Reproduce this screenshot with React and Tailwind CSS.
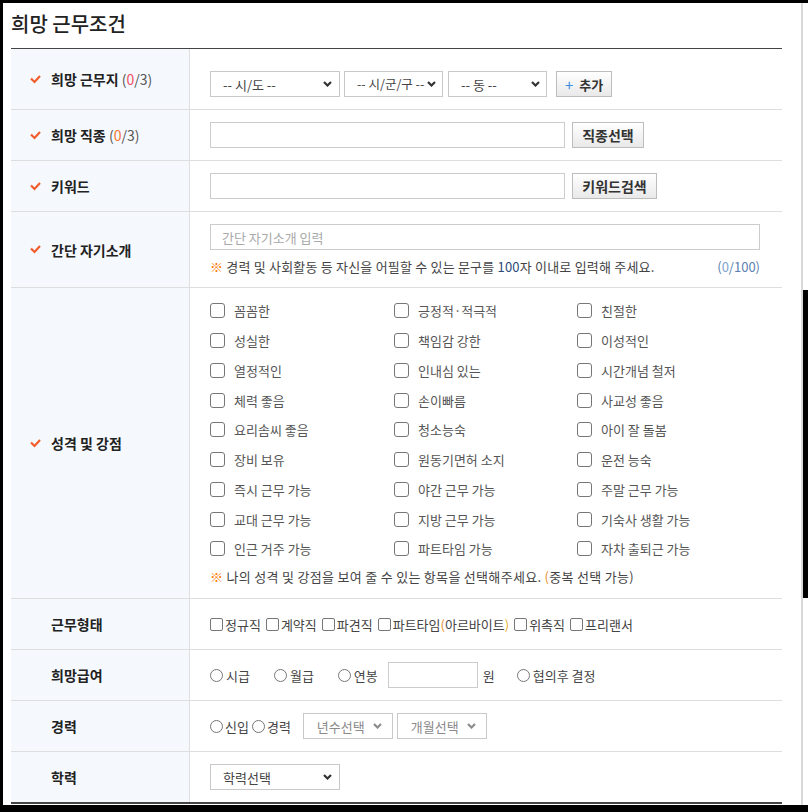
import React from "react";

function Check() {
  return (
    <svg width="11" height="9" viewBox="0 0 11 9" className="mr-[10px] shrink-0">
      <polyline points="1,3.5 4.5,7 10,1" fill="none" stroke="#f25c2a" strokeWidth="2.2" />
    </svg>
  );
}

function Chevron({ light }) {
  return (
    <svg width="9" height="6" viewBox="0 0 9 6" className="shrink-0">
      <polyline points="1,1 4.5,4.5 8,1" fill="none" stroke={light ? "#8c8c8c" : "#333333"} strokeWidth="2.2" />
    </svg>
  );
}

function Select({ className, text, light, small }) {
  let tc = "whitespace-nowrap text-[13px] leading-none text-[#444]";
  if (light) tc = "whitespace-nowrap text-[13px] leading-none text-[#8a8a8a]";
  if (small) tc = "whitespace-nowrap text-[12.5px] leading-none text-[#444]";
  return (
    <div className={"flex shrink-0 items-center justify-between overflow-hidden border border-[#c9c9c9] bg-white " + className}>
      <span className={tc}>{text}</span>
      <Chevron light={light} />
    </div>
  );
}

function Button({ className, children }) {
  return (
    <div className={"flex shrink-0 items-center justify-center border border-[#bdbdbd] bg-linear-to-b from-white to-[#e9e9e9] text-[14px] font-bold leading-none text-[#333] " + className}>
      {children}
    </div>
  );
}

function Label({ check, children }) {
  return (
    <div className="flex w-[179px] shrink-0 items-center border-r border-[#dedede] bg-[#f5f9fe] pl-[19px]">
      {check ? <Check /> : <span className="w-[21px] shrink-0" />}
      <span className="whitespace-nowrap text-[14px] font-bold leading-none text-[#222]">{children}</span>
    </div>
  );
}

function Box() {
  return <span className="block h-[15px] w-[15px] shrink-0 rounded-[3px] border border-[#767676] bg-white" />;
}

function SmallBox() {
  return <span className="block h-[13px] w-[13px] shrink-0 rounded-[2px] border border-[#767676] bg-white" />;
}

function Radio() {
  return <span className="block h-[13px] w-[13px] shrink-0 rounded-full border border-[#767676] bg-white" />;
}

const traits = [
  "꼼꼼한", "긍정적·적극적", "친절한",
  "성실한", "책임감 강한", "이성적인",
  "열정적인", "인내심 있는", "시간개념 철저",
  "체력 좋음", "손이빠름", "사교성 좋음",
  "요리솜씨 좋음", "청소능숙", "아이 잘 돌봄",
  "장비 보유", "원동기면허 소지", "운전 능숙",
  "즉시 근무 가능", "야간 근무 가능", "주말 근무 가능",
  "교대 근무 가능", "지방 근무 가능", "기숙사 생활 가능",
  "인근 거주 가능", "파트타임 가능", "자차 출퇴근 가능",
];

const workTypes = ["정규직", "계약직", "파견직", "__PT__", "위촉직", "프리랜서"];

export default function App() {
  return (
    <div className="h-[812px] w-[808px] overflow-hidden bg-black pl-[3px] pt-[3px] font-['Noto_Sans_CJK_KR','Noto_Sans',sans-serif]">
      <div className="flex h-[802px] w-[805px] bg-white">
        <div className="w-[798px] shrink-0 pl-[8px]">
          <div className="w-[771px]">
            {/* Title */}
            <div className="flex h-[46px] items-center border-b border-[#444] pb-[3px]">
              <h1 className="text-[20px] font-medium leading-none text-[#222]">희망 근무조건</h1>
            </div>

            {/* Row 1 */}
            <div className="flex h-[61px] border-b border-[#dedede]">
              <Label check>
                희망 근무지 <span className="font-normal text-[#555]">(<span className="text-[#ef4f5f]">0</span>/3)</span>
              </Label>
              <div className="flex flex-1 items-start pl-[20px] pt-[22px]">
                <Select className="h-[26px] w-[130px] pl-[12px] pr-[7px]" text="-- 시/도 --" />
                <Select className="ml-[4px] h-[26px] w-[99px] pl-[12px] pr-[6px]" text="-- 시/군/구 --" small />
                <Select className="ml-[5px] h-[26px] w-[99px] pl-[12px] pr-[6px]" text="-- 동 --" />
                <Button className="ml-[9px] h-[26px] w-[56px]">
                  <span className="mr-[6px] text-[15px] font-normal text-[#3d8fe0]">+</span>
                  <span className="text-[13px]">추가</span>
                </Button>
              </div>
            </div>

            {/* Row 2 */}
            <div className="flex h-[51px] border-b border-[#dedede]">
              <Label check>
                희망 직종 <span className="font-normal text-[#555]">(<span className="text-[#f07830]">0</span>/3)</span>
              </Label>
              <div className="flex flex-1 items-center pl-[20px]">
                <div className="h-[26px] w-[355px] border border-[#cccccc] bg-white" />
                <Button className="ml-[7px] h-[26px] w-[72px]">직종선택</Button>
              </div>
            </div>

            {/* Row 3 */}
            <div className="flex h-[51px] border-b border-[#dedede]">
              <Label check>키워드</Label>
              <div className="flex flex-1 items-center pl-[20px]">
                <div className="h-[26px] w-[355px] border border-[#cccccc] bg-white" />
                <Button className="ml-[7px] h-[26px] w-[85px]">키워드검색</Button>
              </div>
            </div>

            {/* Row 4 */}
            <div className="flex h-[76px] border-b border-[#dedede]">
              <Label check>간단 자기소개</Label>
              <div className="flex flex-1 flex-col pl-[20px] pt-[12px]">
                <div className="flex h-[26px] w-[550px] items-center border border-[#cccccc] bg-white pl-[11px]">
                  <span className="text-[13px] leading-none text-[#a9a9a9]">간단 자기소개 입력</span>
                </div>
                <div className="mt-[8px] flex h-[16px] w-[550px] items-center justify-between text-[13px] leading-none text-[#444]">
                  <span className="whitespace-nowrap tracking-[0.2px]">
                    <span className="text-[#ff7a00]">※</span> 경력 및 사회활동 등 자신을 어필할 수 있는 문구를 <span className="text-[#2a4a7a]">100</span>자 이내로 입력해 주세요.
                  </span>
                  <span className="whitespace-nowrap text-[#5a7fb0]">(<span className="text-[#7ea3d0]">0</span>/100)</span>
                </div>
              </div>
            </div>

            {/* Row 5 */}
            <div className="flex h-[311px] border-b border-[#dedede]">
              <Label check>성격 및 강점</Label>
              <div className="flex flex-1 flex-col pl-[20px] pt-[8px]">
                <div className="grid grid-cols-[184px_183px_1fr] auto-rows-[29.75px]">
                  {traits.map((t) => (
                    <div key={t} className="flex items-center">
                      <Box />
                      <span className="ml-[9px] whitespace-nowrap text-[13px] leading-none text-[#555]">{t}</span>
                    </div>
                  ))}
                </div>
                <div className="mt-[4px] flex h-[18px] items-center whitespace-nowrap text-[13px] leading-none tracking-[0.3px] text-[#444]">
                  <span className="text-[#ff7a00]">※</span>&nbsp;나의 성격 및 강점을 보여 줄 수 있는 항목을 선택해주세요.&nbsp;<span className="text-[#e8902a]">(</span>중복 선택 가능)
                </div>
              </div>
            </div>

            {/* Row 6 */}
            <div className="flex h-[51px] border-b border-[#dedede]">
              <Label>근무형태</Label>
              <div className="flex flex-1 items-center gap-[5px] pl-[20px]">
                {workTypes.map((w) => (
                  <div key={w} className="flex items-center">
                    <SmallBox />
                    <span className="ml-[2px] whitespace-nowrap text-[13px] leading-none text-[#444]">
                      {w === "__PT__" ? (
                        <>
                          파트타임<span className="text-[#e8902a]">(</span>아르바이트<span className="text-[#e8b02a]">)</span>
                        </>
                      ) : (
                        w
                      )}
                    </span>
                  </div>
                ))}
              </div>
            </div>

            {/* Row 7 */}
            <div className="flex h-[51px] border-b border-[#dedede]">
              <Label>희망급여</Label>
              <div className="flex flex-1 items-center pl-[20px] text-[13px] leading-none text-[#444]">
                <div className="flex items-center">
                  <Radio />
                  <span className="ml-[3px]">시급</span>
                </div>
                <div className="ml-[24px] flex items-center">
                  <Radio />
                  <span className="ml-[3px]">월급</span>
                </div>
                <div className="ml-[24px] flex items-center">
                  <Radio />
                  <span className="ml-[3px]">연봉</span>
                </div>
                <div className="ml-[10px] h-[26px] w-[90px] border border-[#cccccc] bg-white" />
                <span className="ml-[5px]">원</span>
                <div className="ml-[22px] flex items-center">
                  <Radio />
                  <span className="ml-[3px] whitespace-nowrap">협의후 결정</span>
                </div>
              </div>
            </div>

            {/* Row 8 */}
            <div className="flex h-[51px] border-b border-[#dedede]">
              <Label>경력</Label>
              <div className="flex flex-1 items-center pl-[20px] text-[13px] leading-none text-[#444]">
                <Radio />
                <span className="ml-[2px]">신입</span>
                <div className="ml-[3px]"><Radio /></div>
                <span className="ml-[2px]">경력</span>
                <Select className="ml-[12px] h-[26px] w-[90px] pl-[13px] pr-[10px]" text="년수선택" light />
                <Select className="ml-[4px] h-[26px] w-[90px] pl-[13px] pr-[10px]" text="개월선택" light />
              </div>
            </div>

            {/* Row 9 */}
            <div className="flex h-[50px]">
              <Label>학력</Label>
              <div className="flex flex-1 items-center pl-[20px]">
                <Select className="h-[26px] w-[130px] pl-[12px] pr-[7px]" text="학력선택" />
              </div>
            </div>
            <div className="h-[2px] bg-[#444]" />
          </div>
        </div>

        {/* Right scroll track */}
        <div className="flex w-[7px] shrink-0 flex-col border-l-2 border-[#d9d9d9]">
          <div className="h-[287px] shrink-0" />
          <div className="h-[308px] shrink-0 bg-black" />
        </div>
      </div>
    </div>
  );
}
